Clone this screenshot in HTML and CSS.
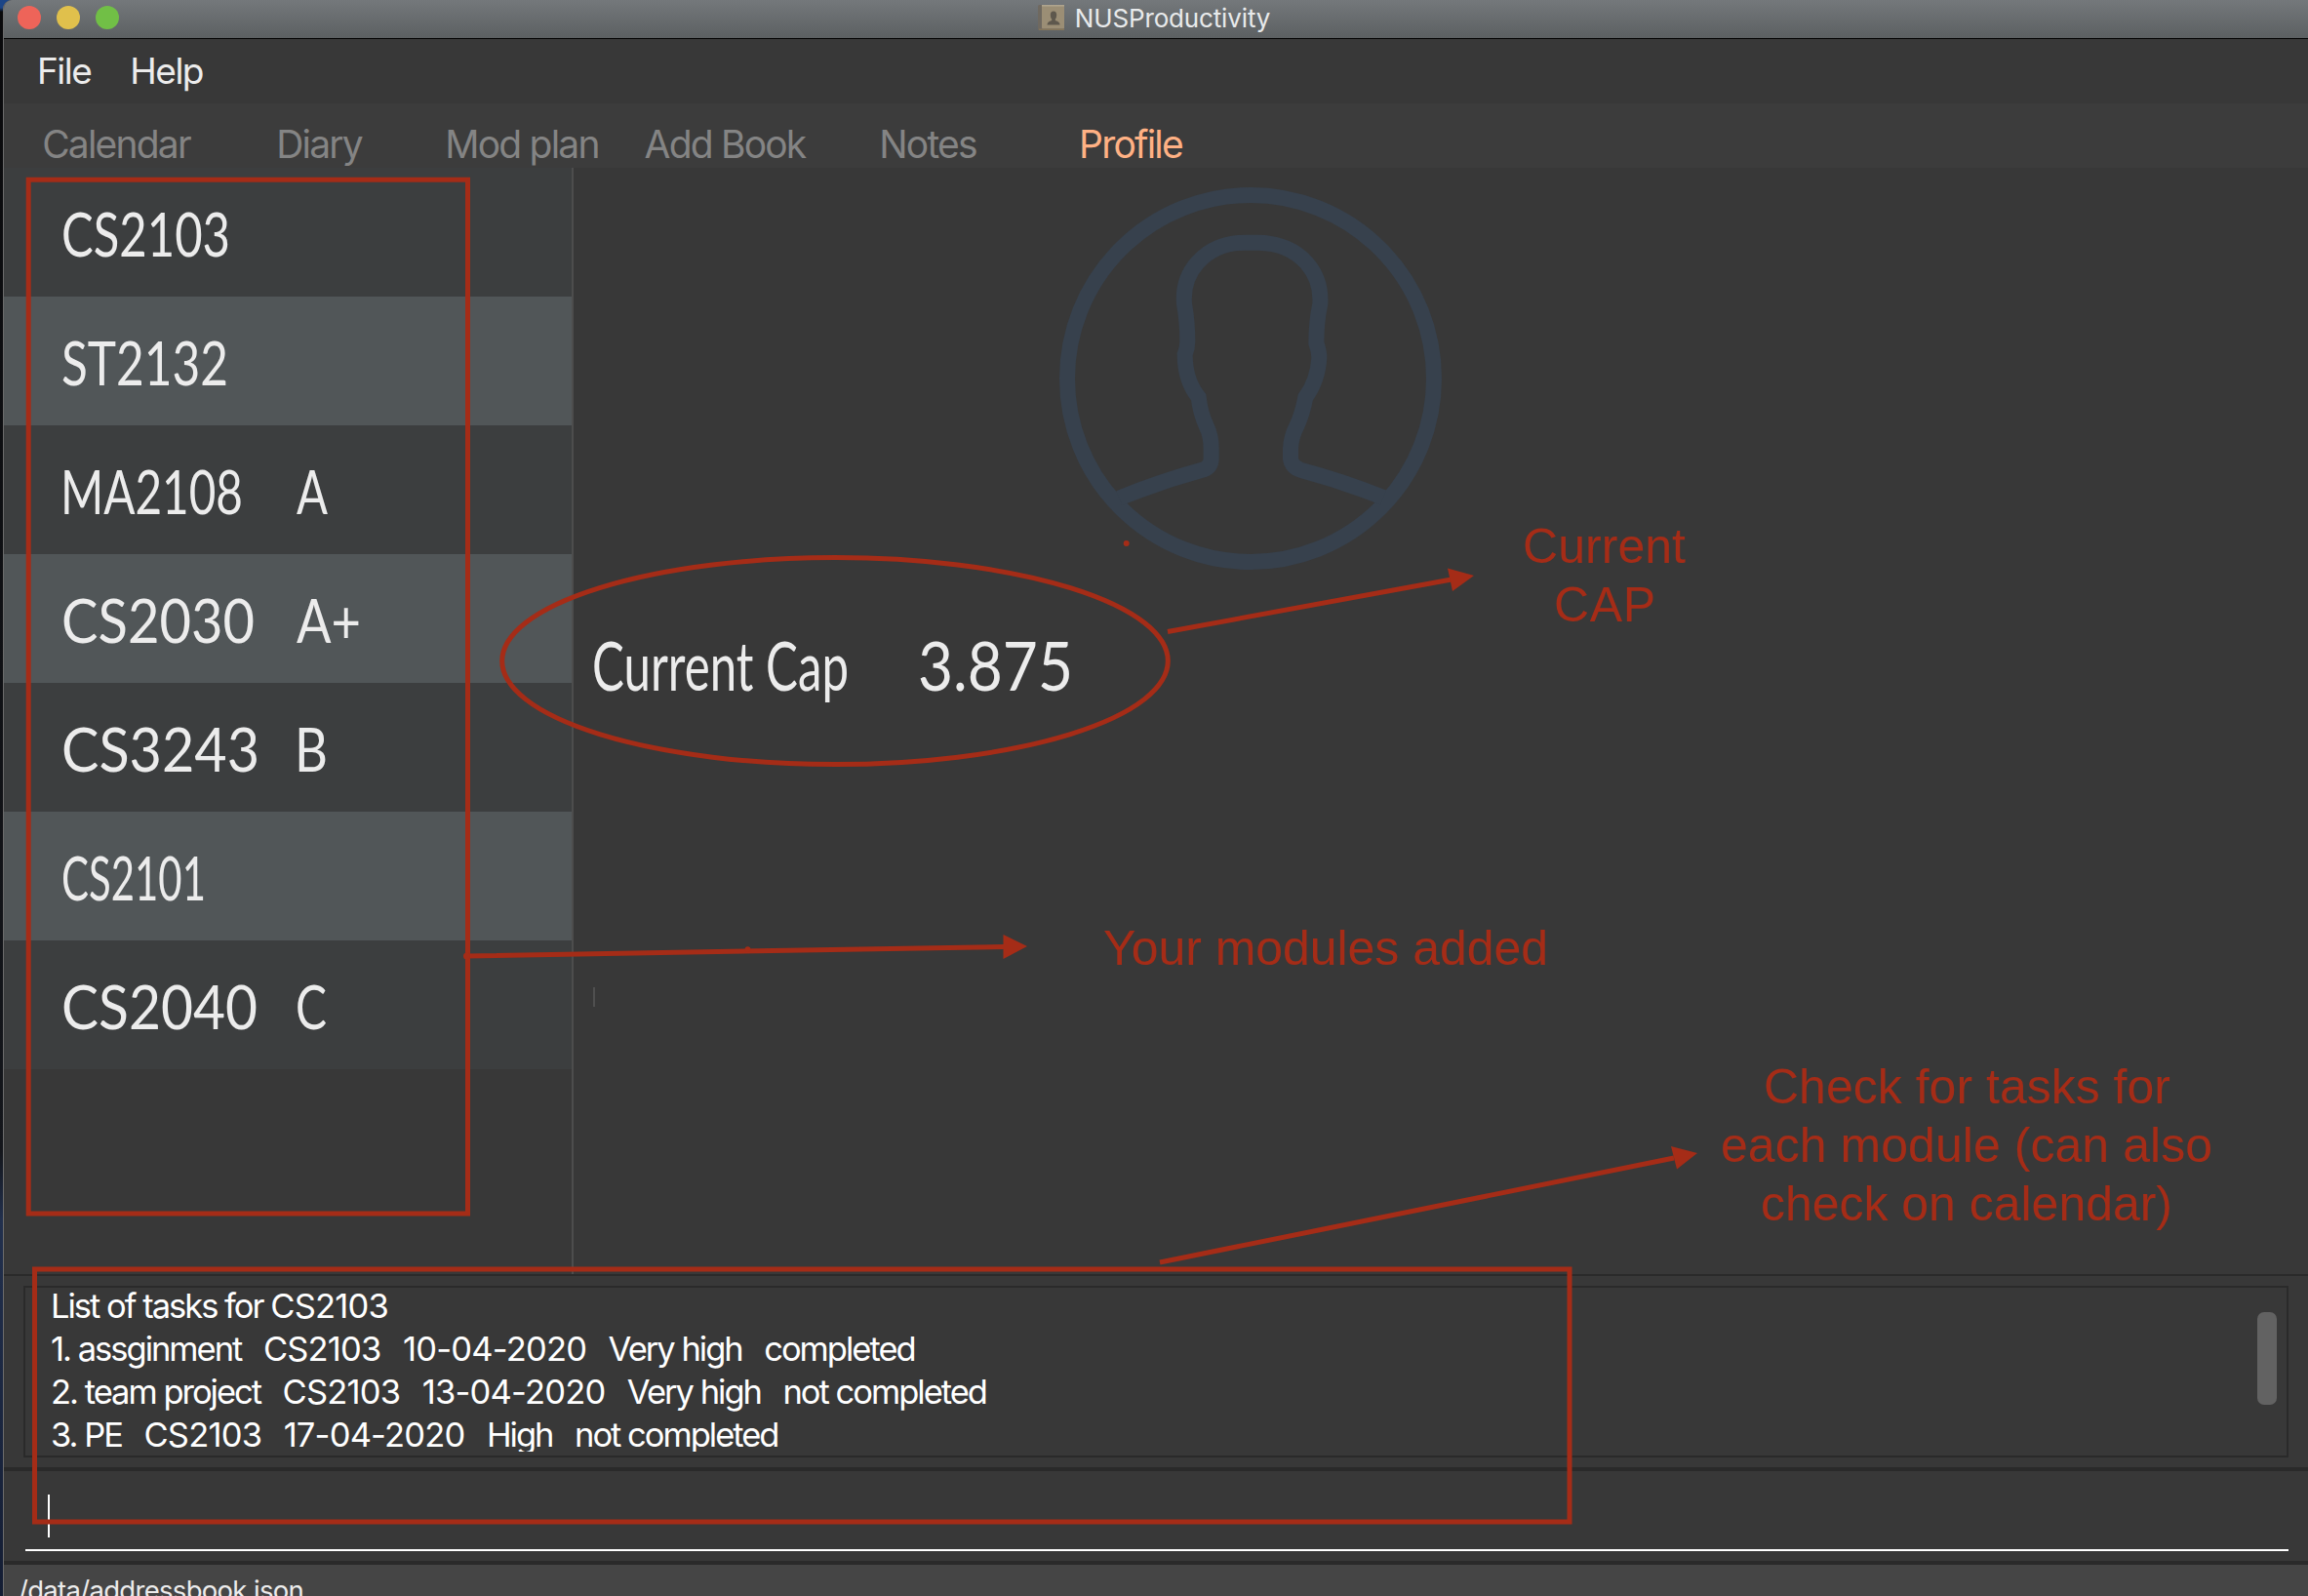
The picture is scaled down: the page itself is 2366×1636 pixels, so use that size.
FILE: index.html
```
<!DOCTYPE html>
<html lang="en">
<head>
<meta charset="utf-8">
<title>NUSProductivity</title>
<link rel="stylesheet" href="styles.css">
</head>
<body>
<div class="desktop">
  <div class="window">
    <header class="titlebar">
      <div class="lights"><span class="light red"></span><span class="light yellow"></span><span class="light green"></span></div>
      <div class="title">
        <svg class="app-icon" width="28" height="28" viewBox="0 0 28 28">
          <rect x="0" y="1" width="27" height="26" rx="1.5" fill="#6f6960"/>
          <rect x="4" y="1" width="23" height="24.5" rx="1" fill="#9b8e75"/>
          <rect x="4" y="1" width="23" height="1.5" fill="#b0a58f"/>
          <rect x="1" y="25.5" width="26" height="1.5" fill="#84755a"/>
          <path d="M16 7.500q3.200 0 3.200 4 0 2.600-1.400 4.200v1.300q4.700 1.200 4.700 4.500H9.500q0-3.300 4.700-4.500v-1.300q-1.400-1.600-1.400-4.200 0-4 3.200-4z" fill="#5e584d"/>
        </svg>
        <span>NUSProductivity</span>
      </div>
    </header>
    <nav class="menubar"><span>File</span><span>Help</span></nav>
    <nav class="tabs">
      <span class="tab">Calendar</span><span class="tab">Diary</span><span class="tab">Mod plan</span><span class="tab">Add Book</span><span class="tab">Notes</span><span class="tab active">Profile</span>
    </nav>
    <main class="main">
      <ul class="modules">
        <li><svg class="hand" width="400" height="132"><text x="59" y="91" textLength="173" lengthAdjust="spacingAndGlyphs">CS2103</text></svg></li>
        <li><svg class="hand" width="400" height="132"><text x="59" y="91" textLength="171" lengthAdjust="spacingAndGlyphs">ST2132</text></svg></li>
        <li><svg class="hand" width="400" height="132"><text x="58" y="91" textLength="187" lengthAdjust="spacingAndGlyphs">MA2108</text><text x="300" y="91" textLength="32" lengthAdjust="spacingAndGlyphs">A</text></svg></li>
        <li><svg class="hand" width="400" height="132"><text x="59" y="91" textLength="198" lengthAdjust="spacingAndGlyphs">CS2030</text><text x="300" y="91" textLength="66" lengthAdjust="spacingAndGlyphs">A+</text></svg></li>
        <li><svg class="hand" width="400" height="132"><text x="59" y="91" textLength="203" lengthAdjust="spacingAndGlyphs">CS3243</text><text x="298" y="91" textLength="34" lengthAdjust="spacingAndGlyphs">B</text></svg></li>
        <li><svg class="hand" width="400" height="132"><text x="59" y="91" textLength="148" lengthAdjust="spacingAndGlyphs">CS2101</text></svg></li>
        <li><svg class="hand" width="400" height="132"><text x="59" y="91" textLength="201" lengthAdjust="spacingAndGlyphs">CS2040</text><text x="299" y="91" textLength="32" lengthAdjust="spacingAndGlyphs">C</text></svg></li>
      </ul>
      <section class="profile">
        <svg class="avatar" width="392" height="392" viewBox="78 66 1176 1176">
          <circle cx="666" cy="654" r="564"/>
          <path d="M262 1022Q390 970 522 934Q545 925 545 900V870Q545 830 530 800Q512 762 506 712Q464 660 464 580Q472 560 472 540Q472 480 462 424Q456 350 504 296Q560 236 650 236H690Q784 238 838 298Q884 350 880 424Q868 480 868 545Q877 570 877 590Q873 660 835 712Q825 765 808 800Q790 835 789 870V900Q792 926 822 936Q950 970 1074 1020"/>
        </svg>
        <svg class="hand cap" width="520" height="100"><text x="0" y="68" textLength="263" lengthAdjust="spacingAndGlyphs">Current Cap</text><text x="334" y="68" textLength="159" lengthAdjust="spacingAndGlyphs">3.875</text></svg>
        <div class="mark"></div>
      </section>
    </main>
    <section class="result">
      <div class="result-box">
        <div class="lines">
          <p class="l1">List of tasks for <span class="n">CS2103</span></p>
          <p><span class="w">1. assginment</span><span class="n">CS2103</span><span class="n">10-04-2020</span><span class="w">Very high</span><span class="w">completed</span></p>
          <p><span class="w">2. team project</span><span class="n">CS2103</span><span class="n">13-04-2020</span><span class="w">Very high</span><span class="w">not completed</span></p>
          <p><span class="w">3. PE</span><span class="n">CS2103</span><span class="n">17-04-2020</span><span class="w">High</span><span class="w">not completed</span></p>
        </div>
        <div class="thumb"></div>
      </div>
    </section>
    <section class="command"><div class="field"><span class="caret"></span></div></section>
    <footer class="status">/data/addressbook.json</footer>
  </div>
  <svg class="notes" width="2366" height="1636" viewBox="0 0 2366 1636">
    <g class="stroke">
      <rect x="29.200" y="184.200" width="450.300" height="1059.800"/>
      <rect x="35.500" y="1301" width="1573.500" height="259"/>
      <ellipse cx="856" cy="677.600" rx="341.300" ry="106"/>
      <path d="M1197 647.500L1488 594M478.500 980L1030 970.500M1189 1294L1716 1187"/>
    </g>
    <g class="fill">
      <path d="M1511 590L1484 582.500L1489 606ZM1053 970L1028.500 958V983ZM1740 1182L1713 1175L1719 1198.500Z"/>
      <circle cx="478.500" cy="980" r="3.500"/><circle cx="766.500" cy="973" r="2.800"/><circle cx="1154.700" cy="557" r="3"/>
      <text x="1561" y="577" textLength="167">Current</text>
      <text x="1593" y="636.500" textLength="104">CAP</text>
      <text x="1131" y="988.500" textLength="456">Your modules added</text>
      <text x="1808" y="1131" textLength="417">Check for tasks for</text>
      <text x="1764" y="1191" textLength="504">each module (can also</text>
      <text x="1805" y="1251" textLength="422">check on calendar)</text>
    </g>
  </svg>
</div>
</body>
</html>
```
FILE: styles.css
```
* { box-sizing: border-box; }
body, p, ul { margin: 0; padding: 0; }
body { background: #0b0d12; font-family: Inter, "Liberation Sans", sans-serif; color: #ececec; }
.desktop {
  position: relative; width: 2366px; height: 1636px; overflow: hidden; padding-left: 3px;
  background: linear-gradient(#1c4587 0, #1c4587 8px, #0a0a0c 12px, #14161b 1180px, #22304d 1250px, #141d33 1636px);
}
.window {
  display: flex; flex-direction: column; height: 1636px; background: #383838;
  border-left: 1px solid #6b6b6b; border-top-left-radius: 9px; overflow: hidden;
}
.titlebar {
  display: grid; grid-template-columns: 1fr auto 1fr; height: 40px; flex: none;
  background: linear-gradient(#74787b, #5c6062); border-bottom: 1px solid #050505;
}
.lights { display: flex; gap: 16px; padding: 6px 0 0 14px; }
.light { width: 24px; height: 24px; border-radius: 50%; }
.red { background: #ee6459; }
.yellow { background: #e0c04c; }
.green { background: #71bf46; }
.title { display: flex; gap: 10px; font-size: 26px; line-height: 37px; letter-spacing: -0.15px; color: #e8eaeb; padding-right: 4px; }
.app-icon { margin-top: 4px; }
.menubar { display: flex; gap: 40px; height: 66px; flex: none; padding-left: 34px; font-size: 37px; line-height: 65px; letter-spacing: -1.500px; }
.tabs {
  display: grid; grid-template-columns: repeat(6, 208px); height: 66px; flex: none; padding-left: 11px;
  background: #3c3c3c; color: #848484; font-size: 39px; line-height: 84px; letter-spacing: -1.800px; text-align: center;
}
.active { color: #ffb184; }
.main { display: flex; height: 1134px; flex: none; }
.modules { width: 584px; list-style: none; border-right: 2px solid #4d4d4d; }
.modules li { height: 132px; background: #3c3e3f; }
.modules li:nth-child(even) { background: #515658; }
.hand { display: block; font-family: Lato, sans-serif; font-size: 62px; fill: #ececec; overflow: visible; }
.profile { flex: 1; display: flex; flex-direction: column; }
.avatar { margin: 20px 0 0 498px; fill: none; stroke: #37414d; stroke-width: 48; }
.cap { margin: 56px 0 0 19px; font-size: 69px; }
.mark { width: 2px; height: 20px; margin: 272px 0 0 20px; background: #4f4f4f; }
.result { height: 198px; flex: none; border-top: 2px solid #2a2a2a; padding: 10px 20px 10px 20px; }
.result-box { display: flex; justify-content: space-between; height: 176px; border: 2px solid #2a2a2a; color: #fff; }
.lines { height: 168px; overflow: hidden; padding-left: 26px; font-size: 34.500px; line-height: 44px; }
.lines p { display: flex; gap: 22.500px; height: 44px; margin-top: -3px; margin-bottom: 3px; white-space: pre; }
.lines .l1 { gap: 0; letter-spacing: -2px; }
.w { letter-spacing: -2px; }
.n { letter-spacing: -0.800px; }
.thumb { width: 20px; height: 95px; margin: 25px 10px 0 0; border-radius: 7px; background: #626262; }
.command { height: 100px; flex: none; border-top: 4px solid #2a2a2a; border-bottom: 4px solid #2a2a2a; padding: 0 20px 0 22px; }
.field { height: 82px; border-bottom: 2px solid #fff; padding: 24px 0 0 23px; }
.caret { display: block; width: 2px; height: 44px; background: #fff; }
.status { flex: 1; background: #454545; padding: 9px 0 0 15px; font-size: 27.500px; line-height: 34px; letter-spacing: -0.700px; overflow: hidden; white-space: nowrap; }
.notes { position: absolute; left: 0; top: 0; font-family: "Liberation Sans", sans-serif; font-size: 50px; }
.stroke { fill: none; stroke: #a52c17; stroke-width: 5; }
.fill { fill: #a52c17; }
```
